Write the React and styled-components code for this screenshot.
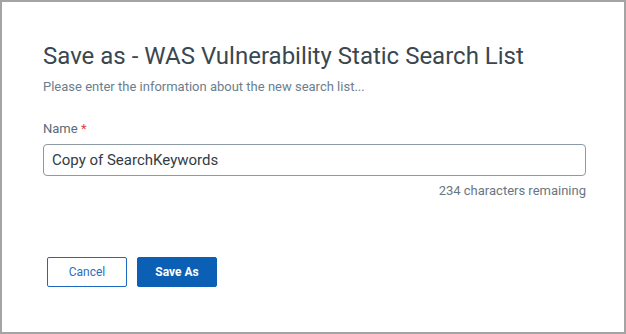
import React from "react";
import styled, { createGlobalStyle } from "styled-components";

const Global = createGlobalStyle`
  html, body { margin: 0; padding: 0; background: #fff; }
  * { box-sizing: border-box; }
`;

const Dialog = styled.div`
  width: 626px;
  height: 334px;
  border: 2px solid #a4a4a4;
  background: #fff;
  font-family: Roboto, "Liberation Sans", sans-serif;
  padding: 40px 40px 0 41px;
  display: flex;
  flex-direction: column;
`;

const Title = styled.h1`
  margin: 0;
  font-size: 24px;
  font-weight: 400;
  line-height: 28px;
  color: #3a4750;
`;

const Subtitle = styled.p`
  margin: 9px 0 0;
  font-size: 13px;
  line-height: 16px;
  color: #6c7e8e;
`;

const Field = styled.div`
  margin-top: 26px;
  display: flex;
  flex-direction: column;
  width: 543px;
`;

const Label = styled.label`
  font-size: 13px;
  line-height: 16px;
  color: #5b6b78;
`;

const Req = styled.span`
  color: #e0413c;
`;

const Input = styled.input`
  margin-top: 7px;
  height: 32px;
  border: 1px solid #8d9aa5;
  border-radius: 4px;
  padding: 0 8px;
  font-family: Roboto, "Liberation Sans", sans-serif;
  font-size: 15px;
  color: #333c44;
  outline: none;
`;

const Hint = styled.div`
  margin-top: 8px;
  align-self: flex-end;
  font-size: 13px;
  line-height: 14px;
  color: #6a7683;
`;

const Actions = styled.div`
  margin-top: 59px;
  margin-left: 4px;
  display: flex;
  gap: 10px;
`;

const Button = styled.button`
  width: 80px;
  height: 30px;
  border-radius: 2px;
  font-family: Roboto, "Liberation Sans", sans-serif;
  font-size: 12px;
  cursor: pointer;
  border: 1px solid ${p => (p.$primary ? "#0b5fb5" : "#1b6ac0")};
  background: ${p => (p.$primary ? "#0b5fb5" : "#fff")};
  color: ${p => (p.$primary ? "#fff" : "#2a6fc0")};
  font-weight: ${p => (p.$primary ? 700 : 400)};
`;

export default function App() {
  return (
    <>
      <Global />
      <Dialog>
        <Title>Save as - WAS Vulnerability Static Search List</Title>
        <Subtitle>Please enter the information about the new search list...</Subtitle>
        <Field>
          <Label>
            Name <Req>*</Req>
          </Label>
          <Input defaultValue="Copy of SearchKeywords" />
          <Hint>234 characters remaining</Hint>
        </Field>
        <Actions>
          <Button>Cancel</Button>
          <Button $primary>Save As</Button>
        </Actions>
      </Dialog>
    </>
  );
}
